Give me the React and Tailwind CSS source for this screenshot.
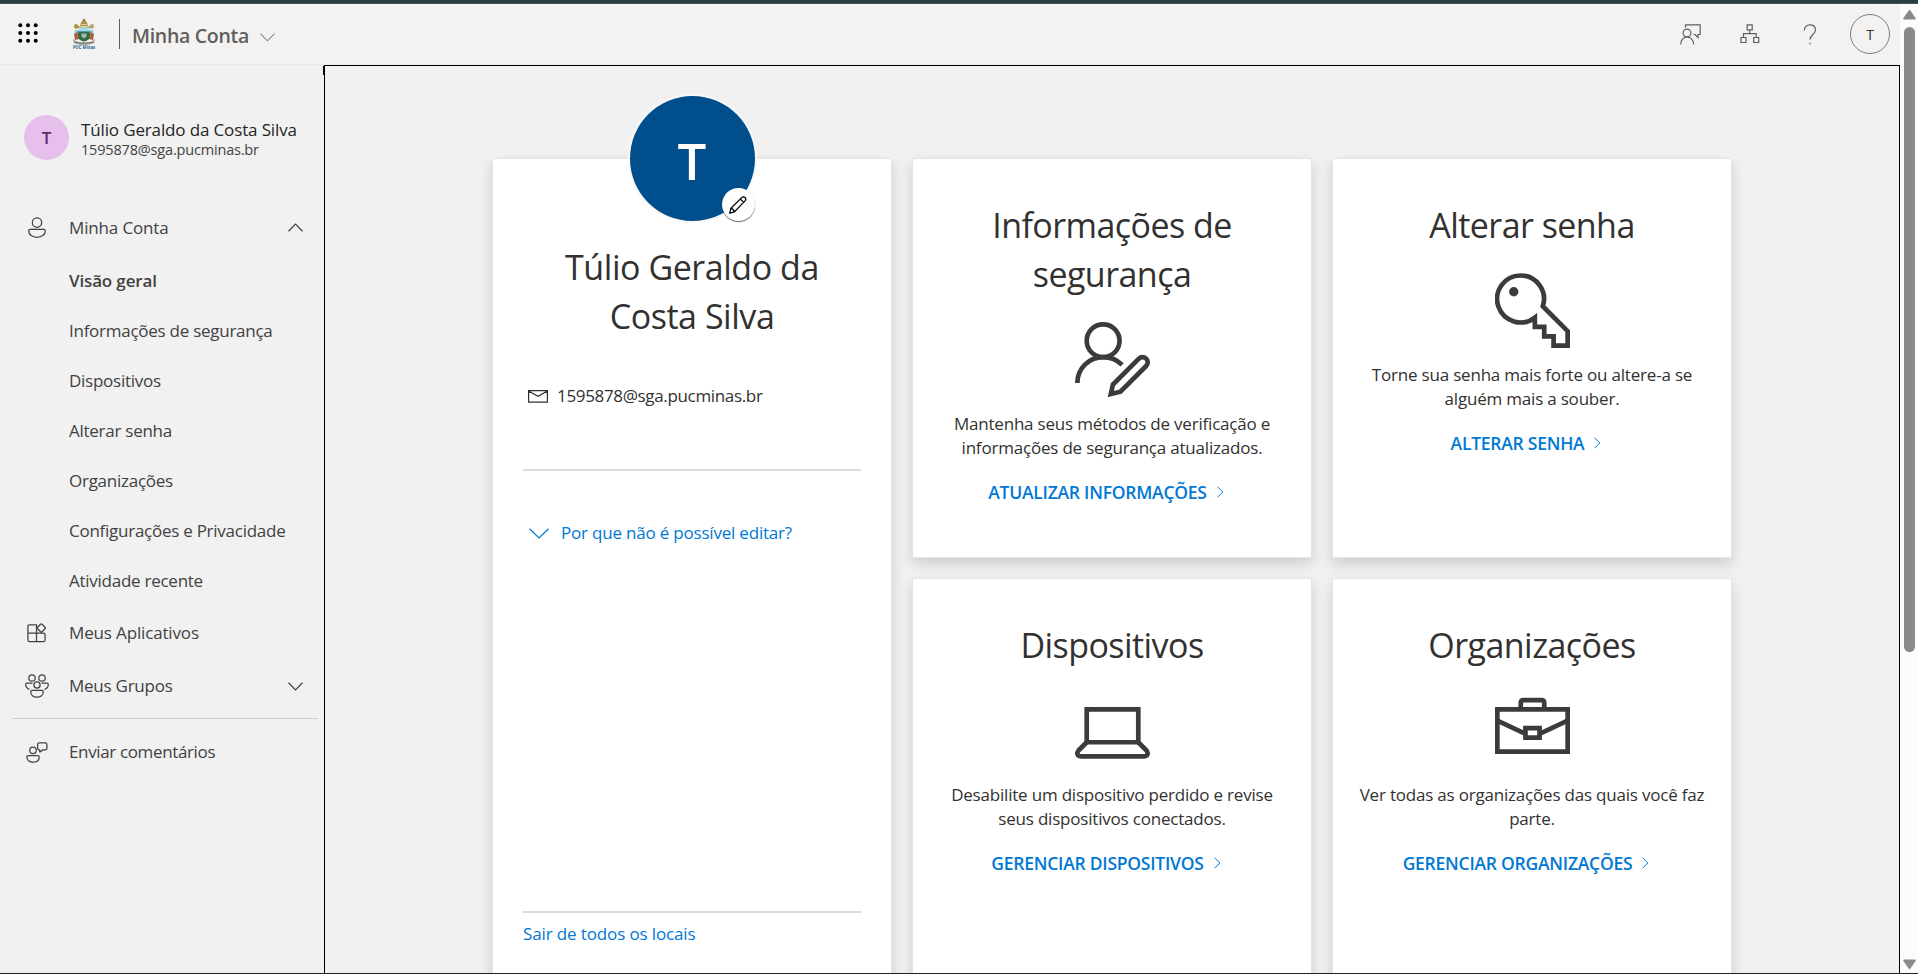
import React from "react";

const stroke = { fill: "none", stroke: "currentColor" };

function Waffle() {
  return (
    <svg className="h-5 w-5" viewBox="0 0 20 20" fill="#000">
      {[2.3, 10, 17.7].map((y) =>
        [2.3, 10, 17.7].map((x) => <circle key={`${x}-${y}`} cx={x} cy={y} r="2" />)
      )}
    </svg>
  );
}

function Crest() {
  return (
    <svg className="h-8 w-6" viewBox="0 0 24 32">
      <path d="M3 6.500 21 19M21 6.500 3 19" stroke="#a8934a" strokeWidth="1.600" />
      <circle cx="4.200" cy="8.500" r="2.200" fill="#b3923a" />
      <circle cx="19.800" cy="8.500" r="2.200" fill="#b5a983" />
      <path d="M3 12h18l.8 5H2.200z" fill="#8cc4d6" />
      <path d="M8.500 9.500C7.800 5.500 9.500 3 12 1.500c2.500 1.500 4.200 4 3.500 8z" fill="#b08d45" />
      <path d="M9.500 6.500h5M9 8.500h6" stroke="#f3e3b5" strokeWidth=".8" />
      <circle cx="12" cy="1.600" r=".9" fill="#6f5b2a" />
      <path d="M7 9.500h10v3.500H7z" fill="#9fdcf0" />
      <path d="M2 16l4.500-2 1 7-4.500 1z" fill="#a8623f" />
      <path d="M22 16l-4.500-2-1 7 4.500 1z" fill="#a8623f" />
      <path d="M6.500 13.500h11v5.500c0 2.500-2.700 4-5.500 4.500-2.800-.5-5.500-2-5.500-4.500z" fill="#2f6b4c" />
      <path d="M9.500 15.500h5v3l-2.500 2-2.500-2z" fill="#9dbfa6" />
      <path d="M1.200 20.500c2 3 5 4 10.800 4s8.800-1 10.800-4l-.3 4.300C20 26.500 16.500 27 12 27s-8-.5-10.500-2.200z" fill="#a9a6a2" />
      <path d="M3 24c2.500 1.400 15.500 1.400 18 0" fill="none" stroke="#5f5b57" strokeWidth=".8" />
      <text x="12" y="31.200" textAnchor="middle" fontSize="4.600" fontWeight="700" fill="#1f6391" fontFamily="Open Sans, sans-serif" textLength="22" lengthAdjust="spacingAndGlyphs">
        PUC Minas
      </text>
    </svg>
  );
}

function Chevron({ className, d, box, width = 1 }) {
  return (
    <svg className={className} viewBox={box}>
      <path d={d} {...stroke} strokeWidth={width} />
    </svg>
  );
}

function FeedbackIcon() {
  return (
    <svg className="h-[21px] w-[21px]" viewBox="0 0 21 21" {...stroke} strokeWidth="1.200">
      <path d="M5.500 3.500V.800h14.700v9.700h-2.200v3l-3-3h-1.500" />
      <circle cx="7" cy="9" r="3.900" />
      <path d="M.700 20.500c0-4.500 2.700-7.500 6.300-7.500s6.700 3 6.700 7.500" />
    </svg>
  );
}

function OrgIcon() {
  return (
    <svg className="h-5 w-5" viewBox="0 0 20 20" {...stroke} strokeWidth="1.200">
      <path d="M7.200.800h5v5h-5zM1 13.500h5v5H1zM13.700 13.500h5v5h-5zM9.700 5.800v4M3.500 13.500V9.700h12.700v3.800" />
    </svg>
  );
}

function HelpIcon() {
  return (
    <svg className="h-[21px] w-[14px]" viewBox="0 0 14 21" {...stroke} strokeWidth="1.200">
      <path d="M1.300 6.500C1.300 3 3.700.800 7 .800s5.500 2.100 5.500 5.200C12.500 10.300 7 10.800 7 15.500" />
      <path d="M7 18.800v1.600" />
    </svg>
  );
}

function PersonIcon() {
  return (
    <svg className="h-[21px] w-[18px]" viewBox="0 0 18 21" {...stroke} strokeWidth="1.250">
      <circle cx="9" cy="5.600" r="4.700" />
      <path d="M2.300 12.300h13.400c.9 0 1.600.7 1.600 1.600 0 4-3.800 6.400-8.300 6.400S.7 17.900.7 13.900c0-.9.700-1.600 1.600-1.600z" />
    </svg>
  );
}

function AppsIcon() {
  return (
    <svg className="h-5 w-5" viewBox="0 0 20 20" {...stroke} strokeWidth="1.250">
      <path d="M9.500 10V1.900H2.400C1.500 1.900.9 2.500.9 3.400v13.700c0 .9.600 1.500 1.500 1.500h14.200c.9 0 1.500-.6 1.500-1.500v-5.600c0-.9-.6-1.500-1.500-1.500zM.9 10h8.600v8.600" />
      <path d="m13.500 1.300-2.900 2.900c-.5.500-.5 1.100 0 1.600l2.900 2.900c.5.500 1.100.5 1.600 0L18 5.800c.5-.5.500-1.100 0-1.600l-2.900-2.900c-.5-.5-1.100-.5-1.600 0z" />
    </svg>
  );
}

function GroupsIcon() {
  return (
    <svg className="h-6 w-6" viewBox="0 0 24 24" {...stroke} strokeWidth="1.250">
      <circle cx="7" cy="4" r="3.200" />
      <circle cx="17" cy="4" r="3.200" />
      <circle cx="12" cy="11" r="3.100" />
      <path d="M7 16.300h10c.8 0 1.300.5 1.300 1.300 0 3.400-2.700 5.600-6.300 5.600s-6.300-2.200-6.300-5.600c0-.8.500-1.300 1.300-1.300z" />
      <path d="M7.500 9.200H2c-.8 0-1.300.5-1.300 1.300 0 2.400 1.300 4 3.600 4.800M16.500 9.200H22c.8 0 1.300.5 1.300 1.300 0 2.400-1.300 4-3.600 4.800" />
    </svg>
  );
}

function CommentsIcon() {
  return (
    <svg className="h-[21px] w-[22px]" viewBox="0 0 22 21" {...stroke} strokeWidth="1.250">
      <circle cx="7" cy="8.300" r="3.300" />
      <path d="M2.200 13.500h9.600c.8 0 1.400.6 1.400 1.400 0 3.300-2.600 5.300-6.200 5.300S.8 18.200.8 14.900c0-.8.600-1.400 1.400-1.400z" />
      <path d="M13.300.800h5.900c1 0 1.700.7 1.700 1.700v3.700c0 1-.7 1.700-1.700 1.700h-2.600l-2.500 2c-.2.100-.4 0-.4-.2V7.900h-.4c-1 0-1.700-.7-1.700-1.700V2.500c0-1 .7-1.700 1.700-1.700z" />
    </svg>
  );
}

function PencilIcon() {
  return (
    <svg className="h-[18px] w-[18px]" viewBox="0 0 18 18" {...stroke} strokeWidth="1.300">
      <path d="m.8 17.100 1.100-4.700L12.700 1.600c.9-.9 2.400-1 3.300-.1s.9 2.400 0 3.400L5.400 15.900zM11.300 3l3.400 3.400M1.900 12.400c1.900.3 3.100 1.600 3.500 3.500" />
    </svg>
  );
}

function MailIcon() {
  return (
    <svg className="h-[13px] w-5" viewBox="0 0 20 13" {...stroke} strokeWidth="1.200">
      <path d="M.6.6h18.800v11.500H.6zM.6.900 10 6.300 19.400.9" />
    </svg>
  );
}

const tileIcons = {
  security: (
    <>
      <circle cx="6" cy="4" r="3.500" />
      <path d="M.5 13C.5 9.960 2.960 7.500 6 7.500c1.600 0 3 .6 4.050 1.650" />
      <path d="M8.100 13.340 13.620 7.820a1.100 1.100 0 0 1 1.560 1.560L9.700 14.860 7.640 15.360Z" />
    </>
  ),
  key: (
    <>
      <path d="M10.200 7.100A5 5 0 1 0 8.500 9.500V11.500H10.500V13.500H12.500V15.500H15.500V12.400Z" />
      <circle cx="4" cy="4" r="1" fill="currentColor" stroke="none" />
    </>
  ),
  laptop: (
    <>
      <path d="M2.500 3.500h11v7h-11z" />
      <path d="M2.500 10.500.9 12.100C.2 12.800.5 13.500 1.200 13.500H14.800C15.500 13.500 15.800 12.800 15.100 12.100L13.500 10.500" />
    </>
  ),
  briefcase: (
    <>
      <path d="M.5 3.500h15v9H.5zM5.500 3.500V2a.5.5 0 0 1 .5-.5h4a.5.5 0 0 1 .5.5v1.500M6.500 7.500h3v2h-3z" />
      <path d="M.5 5.900 6.300 8.600M15.500 5.900 9.700 8.600" />
    </>
  ),
};

function Tile({ title, icon, text, action }) {
  return (
    <section className="flex h-[400px] w-[400px] flex-col items-center rounded-[2px] border border-[#e5e5e5] bg-white bg-clip-padding pt-[42px] text-center shadow-[0_6px_14px_rgba(0,0,0,0.15)]">
      <h2 className="text-[34px] leading-[49px] tracking-[-0.55px] whitespace-pre-line text-[#323130]">{title}</h2>
      <svg className="mt-[23px] h-[75px] w-[75px] text-[#3b3b3b]" viewBox="0 0 16 16" fill="none" stroke="currentColor" strokeWidth="1">
        {tileIcons[icon]}
      </svg>
      <p className="mt-[15px] text-[17px] leading-6 tracking-[-0.2px] whitespace-pre-line">{text}</p>
      <a className="mt-5 flex items-center text-[17.5px] leading-6 font-semibold tracking-[-0.24px] text-[#0078d4]">
        {action}
        <Chevron className="mr-[12px] ml-[10px] h-3 w-[7px]" box="0 0 7 12" d="M.5.700 5.800 6 .5 11.300" />
      </a>
    </section>
  );
}

function NavRow({ icon, label, height, trailing, tracking = "tracking-[-0.15px]" }) {
  return (
    <div className={`flex items-center ${height}`}>
      <div className="flex w-[73px] shrink-0 justify-center">{icon}</div>
      <span className={`-ml-[4px] grow text-[17px] ${tracking}`}>{label}</span>
      {trailing}
    </div>
  );
}

const subItems = [
  "Informações de segurança",
  "Dispositivos",
  "Alterar senha",
  "Organizações",
  "Configurações e Privacidade",
  "Atividade recente",
];

function Sidebar() {
  return (
    <aside className="w-[324px] shrink-0 pt-[50px] text-[#424242]">
      <div className="flex h-[45px] gap-[12px] pl-6">
        <div className="flex h-[45px] w-[45px] items-center justify-center rounded-full bg-[#e6bfed] text-[17px] font-semibold text-[#5c2a6e]">T</div>
        <div className="flex flex-col pt-[5px] whitespace-nowrap">
          <span className="text-[17px] leading-5 tracking-[-0.14px] text-[#242424]">Túlio Geraldo da Costa Silva</span>
          <span className="text-[14.5px] leading-5 tracking-[-0.18px]">1595878@sga.pucminas.br</span>
        </div>
      </div>
      <nav className="mt-[41px]">
        <NavRow
          height="h-[53px]"
          icon={<PersonIcon />}
          label="Minha Conta"
          trailing={<Chevron className="mr-[21px] h-[9px] w-[15px]" box="0 0 15 9" d="M.5 8.300 7.500 1.100 14.500 8.300" width={1.250} />}
        />
        <div className="mt-[2px] pl-[69px] text-[17px] tracking-[-0.26px]">
          <div className="flex h-[50px] items-center font-semibold tracking-[-0.15px]">Visão geral</div>
          {subItems.map((s) => (
            <div key={s} className="flex h-[50px] items-center">{s}</div>
          ))}
        </div>
        <NavRow height="h-[54px]" icon={<AppsIcon />} label="Meus Aplicativos" />
        <NavRow
          height="h-[52px]"
          icon={<GroupsIcon />}
          label="Meus Grupos"
          tracking="tracking-[-0.25px]"
          trailing={<Chevron className="mr-[21px] h-[9px] w-[15px]" box="0 0 15 9" d="M.5.700 7.500 7.900 14.500.700" width={1.250} />}
        />
        <div className="mt-[6px] mr-[6px] ml-3 h-px bg-[#cfcfcf]" />
        <NavRow height="h-[66px]" icon={<CommentsIcon />} label="Enviar comentários" tracking="tracking-[-0.36px]" />
      </nav>
    </aside>
  );
}

function ProfileCard() {
  return (
    <section className="flex h-[840px] w-[400px] flex-col rounded-[2px] border border-[#e5e5e5] bg-white bg-clip-padding px-[30px] shadow-[0_6px_14px_rgba(0,0,0,0.15)]">
      <div className="relative -mt-[63px] flex h-[125px] w-[125px] items-center justify-center self-center rounded-full bg-[#004e8c] text-[51px] font-semibold text-white ring-2 ring-[#f8f8f8]">
        <span className="pt-[4px]">T</span>
        <div className="absolute right-0 bottom-0 flex h-[33px] w-[33px] items-center justify-center rounded-full bg-white text-black shadow-[0_1px_1px_rgba(0,0,0,0.6)]">
          <PencilIcon />
        </div>
      </div>
      <h1 className="mt-[22px] text-center text-[34px] leading-[49px] tracking-[-0.45px] whitespace-pre-line text-[#323130]">
        {"Túlio Geraldo da\nCosta Silva"}
      </h1>
      <div className="mt-[43px] flex h-6 items-center gap-[9px] pl-[5px]">
        <MailIcon />
        <span className="text-[17px] tracking-[-0.34px]">1595878@sga.pucminas.br</span>
      </div>
      <div className="mt-[61px] h-[2px] shrink-0 bg-[#dadcdb]" />
      <div className="mt-[50px] flex h-6 items-center gap-3 pl-[6px] text-[#0078d4]">
        <Chevron className="h-[11px] w-5" box="0 0 20 11" d="M.5.700 10 10 19.500.700" width={1.200} />
        <span className="text-[17px] tracking-[-0.2px]">Por que não é possível editar?</span>
      </div>
      <div className="mt-[366px] h-[2px] shrink-0 bg-[#dadcdb]" />
      <a className="mt-[9px] text-[17px] leading-6 tracking-[-0.13px] text-[#0078d4]">Sair de todos os locais</a>
    </section>
  );
}

function Header() {
  return (
    <header className="flex h-[61px] shrink-0 items-start border-b border-[#eaeaea] bg-[#f3f2f1] text-[#605e5c]">
      <div className="pt-[19px] pl-[18px]"><Waffle /></div>
      <div className="pt-[14px] pl-[34px]"><Crest /></div>
      <div className="mt-[15px] ml-[23px] h-[30px] w-px bg-[#605e5c]" />
      <div className="mt-[13px] ml-[12px] text-[19.5px] leading-[38px] font-semibold tracking-[-0.3px]">Minha Conta</div>
      <Chevron className="mt-[29px] ml-[11px] h-[9px] w-[15px]" box="0 0 15 9" d="M.5.700 7.500 7.900 14.500.700" />
      <div className="ml-auto flex pr-[10px]">
        <div className="mt-5 mr-[39px]"><FeedbackIcon /></div>
        <div className="mt-5 mr-[43px]"><OrgIcon /></div>
        <div className="mt-5 mr-[33px]"><HelpIcon /></div>
        <div className="mt-[10px] flex h-10 w-10 items-center justify-center rounded-full border border-[#7f7d7b] pt-px text-[14px] font-medium text-[#323130]">T</div>
      </div>
    </header>
  );
}

function Scrollbar() {
  return (
    <div className="flex w-[18px] shrink-0 flex-col items-center bg-[#fcfcfc] pt-[6px] pb-1">
      <svg className="h-[10px] w-[13px] shrink-0" viewBox="0 0 13 10" fill="#8a8a8a">
        <path d="M5.600.600Q6.500-.400 7.400.600L12.700 8.300Q13 9.500 12 9.500H1Q0 9.500.3 8.300z" />
      </svg>
      <div className="mt-[7px] h-[625px] w-[11px] rounded-full bg-[#8a8a8a]" />
      <svg className="mt-auto h-[10px] w-[13px] shrink-0" viewBox="0 0 13 10" fill="#8a8a8a">
        <path d="M5.600 9.400Q6.500 10.400 7.400 9.400L12.700 1.700Q13 .500 12 .500H1Q0 .500.3 1.700z" />
      </svg>
    </div>
  );
}

export default function App() {
  return (
    <div className="flex h-[974px] w-[1918px] flex-col overflow-hidden bg-[#f1f1f1] font-['Open_Sans','Noto_Sans',sans-serif] text-[#323130]">
      <div className="h-1 shrink-0 border-b border-[#4a555a] bg-[#2a3d44]" />
      <div className="flex min-h-0 grow">
        <div className="flex w-[1900px] flex-col">
          <Header />
          <div className="flex min-h-0 grow">
            <Sidebar />
            <main className="relative grow border-t border-r border-l border-black">
              <div className="absolute top-0 -left-[2px] h-[9px] w-px bg-black" />
              <div className="flex h-full items-start gap-5 overflow-hidden pt-[92px] pl-[167px]">
                <ProfileCard />
                <div className="grid grid-cols-[400px_400px] gap-5">
                  <Tile
                    title={"Informações de\nsegurança"}
                    icon="security"
                    text={"Mantenha seus métodos de verificação e\ninformações de segurança atualizados."}
                    action="ATUALIZAR INFORMAÇÕES"
                  />
                  <Tile
                    title="Alterar senha"
                    icon="key"
                    text={"Torne sua senha mais forte ou altere-a se\nalguém mais a souber."}
                    action="ALTERAR SENHA"
                  />
                  <Tile
                    title="Dispositivos"
                    icon="laptop"
                    text={"Desabilite um dispositivo perdido e revise\nseus dispositivos conectados."}
                    action="GERENCIAR DISPOSITIVOS"
                  />
                  <Tile
                    title="Organizações"
                    icon="briefcase"
                    text={"Ver todas as organizações das quais você faz\nparte."}
                    action="GERENCIAR ORGANIZAÇÕES"
                  />
                </div>
              </div>
            </main>
          </div>
        </div>
        <Scrollbar />
      </div>
      <div className="h-px shrink-0 bg-[#222]" />
    </div>
  );
}
